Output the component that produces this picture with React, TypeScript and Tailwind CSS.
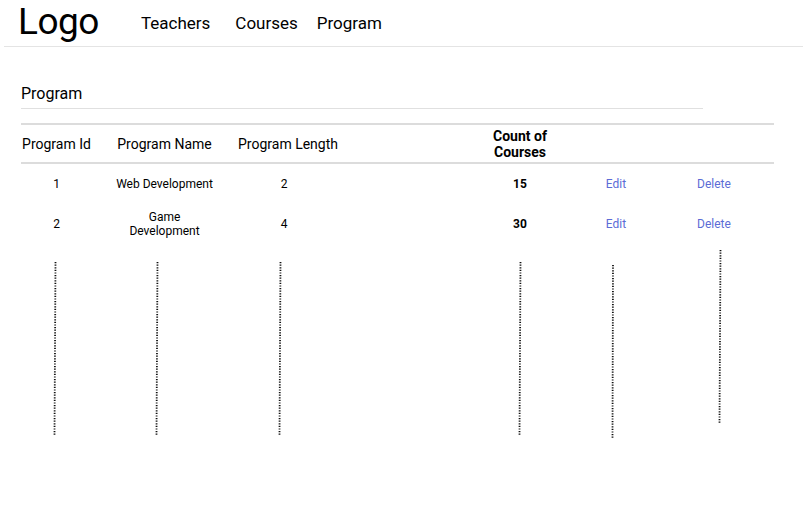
import React from 'react';

const programs = [
  { id: 1, name: 'Web Development', length: 2, courses: 15 },
  { id: 2, name: 'Game Development', length: 4, courses: 30 },
];

// grid columns: id | name | length | spacer | count | edit | delete | pad
const cols = 'grid grid-cols-[71px_145px_102px_131px_100px_92px_104px_8px]';

// hand-drawn dotted column guides
const guides = [
  { x1: 55.5, y1: 262, x2: 54.5, y2: 435 },
  { x1: 157.5, y1: 262, x2: 156.5, y2: 435 },
  { x1: 280.5, y1: 262, x2: 279.5, y2: 435 },
  { x1: 520.5, y1: 262, x2: 519.5, y2: 435 },
  { x1: 613, y1: 265, x2: 612.5, y2: 438 },
  { x1: 720.5, y1: 250, x2: 719.5, y2: 423 },
];

export default function App() {
  return (
    <div className="w-[807px] h-[511px] bg-white text-black overflow-hidden font-['Roboto','Liberation_Sans',sans-serif]">
      {/* Header */}
      <div className="flex items-end mx-[4px] h-[47px] border-b border-[#e4e4e4]">
        <div className="pl-[14px] text-[37px] leading-none pb-[6px] tracking-[-0.5px]">Logo</div>
        <nav className="flex items-center gap-[25px] ml-[42px] pb-[14px] text-[17px] leading-none">
          <span>Teachers</span>
          <span>Courses</span>
          <span className="-ml-[6px]">Program</span>
        </nav>
      </div>

      {/* Title */}
      <div className="ml-[21px] mt-[37px] w-[682px] border-b border-[#e0e0e0] pb-[4px] text-[16px] leading-[20px]">
        Program
      </div>

      {/* Table */}
      <div className="ml-[21px] mt-[14px] w-[753px]">
        <div className={`${cols} items-center h-[41px] border-y-2 border-[#dcdcdc] text-[14px] leading-[16px]`}>
          <div className="text-center whitespace-nowrap">Program Id</div>
          <div className="text-center whitespace-nowrap">Program Name</div>
          <div className="text-center whitespace-nowrap">Program Length</div>
          <div />
          <div className="text-center font-bold">Count of<br />Courses</div>
          <div />
          <div />
          <div />
        </div>
        {programs.map((p) => (
          <div key={p.id} className={`${cols} items-center h-[40px] text-[12px] leading-[14px]`}>
            <div className="text-center">{p.id}</div>
            <div className="text-center px-[22px]">{p.name}</div>
            <div className="text-center -ml-[8px]">{p.length}</div>
            <div />
            <div className="text-center font-bold">{p.courses}</div>
            <div className="text-center text-[#5b6bd6]">Edit</div>
            <div className="text-center text-[#5b6bd6]">Delete</div>
            <div />
          </div>
        ))}
      </div>

      {/* Dotted guides */}
      <svg width="807" height="200" viewBox="0 244 807 200" className="block">
        {guides.map((g, i) => (
          <line key={i} {...g} stroke="#111" strokeWidth="1.8" strokeDasharray="1.2 1.4" />
        ))}
      </svg>
    </div>
  );
}
